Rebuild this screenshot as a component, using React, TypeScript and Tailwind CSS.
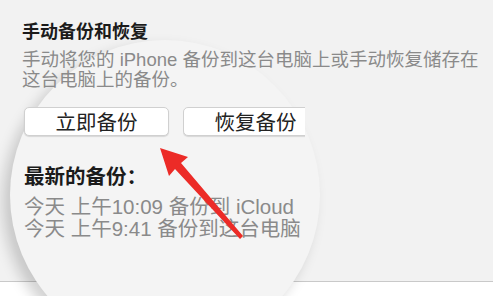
import React from 'react';

const textFont = {
  fontFamily: '"Liberation Sans", "Noto Sans CJK SC", sans-serif',
};

const RedArrow = () => (
  <svg
    className="pointer-events-none absolute left-0 top-0 z-20"
    width="493"
    height="296"
    viewBox="0 0 493 296"
  >
    <polygon
      points="160,148 188,157 181,163 243,236 240,239 175,169 169,176"
      fill="#ec2b27"
    />
  </svg>
);

export default function App() {
  return (
    <div className="relative h-[296px] w-[493px] overflow-hidden bg-white" style={textFont}>
      {/* panel */}
      <div className="relative h-[282px] border-b border-[#c9c9c9] bg-[#f2f2f2]">
        {/* magnifier lens */}
        <div className="absolute left-[10px] top-[40px] z-0 h-[310px] w-[310px] rounded-full bg-[#f4f4f4] shadow-[-7px_7px_14px_rgba(0,0,0,0.18)]" />

        <div className="relative z-10 pl-[22px] pt-[21px]">
          <h3 className="text-[18px] font-bold leading-[22px] text-[#1b1b1b]">手动备份和恢复</h3>
          <p className="mt-[7px] w-[465px] text-[18.5px] leading-[20px] text-[#8a8a8a]">
            手动将您的 iPhone 备份到这台电脑上或手动恢复储存在这台电脑上的备份。
          </p>

          <div className="mt-[17px] flex gap-[14px] pl-[2px]">
            <button className="h-[29px] w-[145px] rounded-[5px] border border-[#d0d0d0] bg-white text-[20.5px] text-[#222] shadow-[0_1px_1px_rgba(0,0,0,0.12)]">
              立即备份
            </button>
            <div className="w-[122px] overflow-hidden pb-[2px]">
              <button className="h-[29px] w-[145px] rounded-[5px] border border-[#d0d0d0] bg-white text-[20.5px] text-[#222] shadow-[0_1px_1px_rgba(0,0,0,0.12)]">
                恢复备份
              </button>
            </div>
          </div>

          <h4 className="mt-[27px] pl-[2px] text-[20.5px] font-bold leading-[22px] text-[#1b1b1b]">最新的备份：</h4>
          <div className="mt-[8px] pl-[2px] text-[20.5px] leading-[22px] text-[#8a8a8a]">
            <p>今天 上午10:09 备份到 iCloud</p>
            <p>今天 上午9:41 备份到这台电脑</p>
          </div>
        </div>
      </div>
      <RedArrow />
    </div>
  );
}
